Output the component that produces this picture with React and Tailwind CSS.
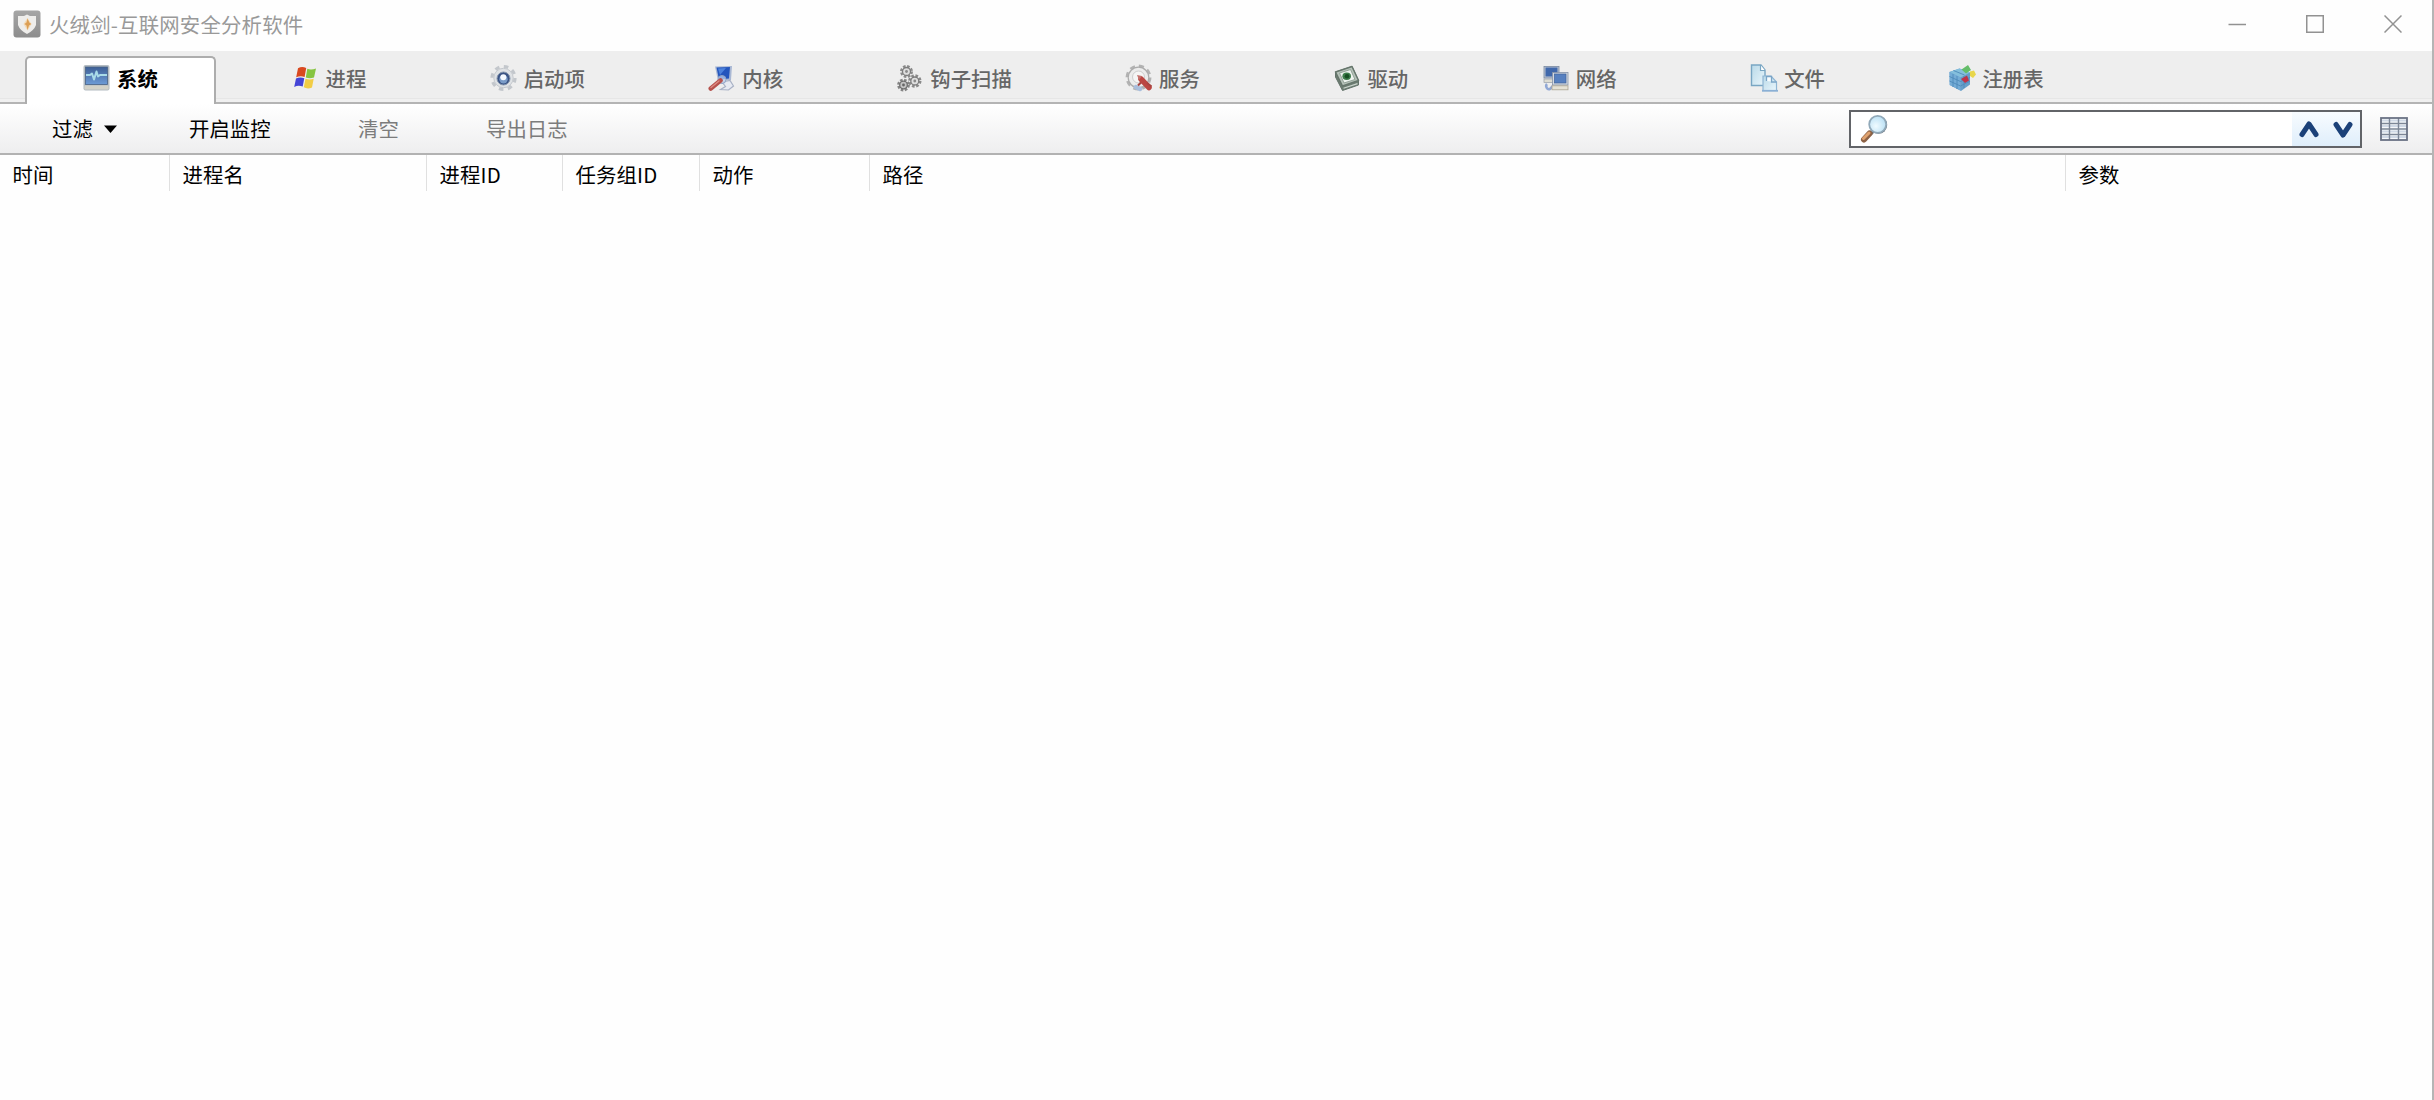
import React from 'react';

const SystemIcon = () => (
    <svg width="28" height="28" viewBox="0 0 28 28">
        <defs>
            <linearGradient id="sysScreen" x1="0" y1="0" x2="0" y2="1">
                <stop offset="0" stopColor="#3d5f96" />
                <stop offset="1" stopColor="#6d9bd6" />
            </linearGradient>
        </defs>
        <rect x="0.5" y="1" width="26" height="25.5" rx="2" fill="#b4bcc2" />
        <rect x="2.5" y="3" width="22" height="17.5" fill="url(#sysScreen)" stroke="#4a6386" strokeWidth="0.8" />
        <rect x="1.5" y="21.5" width="24" height="4" fill="#d3d2c8" />
        <path d="M3 11h4l2-1.500 2 6 2.5-8 1.500 5 2-1.500h7" fill="none" stroke="#a9dbe8" strokeWidth="2" strokeLinejoin="round" />
    </svg>
);

const ProcessIcon = () => (
    <svg width="28" height="28" viewBox="0 0 28 28">
        <path d="M6 4.200Q10 2 14.200 4L12.600 13Q8.500 11.300 4.200 13.300Z" fill="#d9481f" />
        <path d="M15.300 4.800Q19 6.500 24 4.500L22 13.500Q17.600 15 13.800 13.400Z" fill="#86c440" />
        <path d="M4 14.500Q8.200 12.600 12.300 14.300L10.700 22.600Q6.500 20.800 2.200 22.900Z" fill="#4444d6" />
        <path d="M13.500 14.700Q17.300 16.300 21.700 14.800L20 23.500Q15.700 25.500 11.800 23.300Z" fill="#f2cd45" />
    </svg>
);

const StartupIcon = () => (
    <svg width="28" height="28" viewBox="0 0 28 28">
        <circle cx="13.500" cy="14" r="11.500" fill="none" stroke="#c3c7cc" strokeWidth="3.200" strokeDasharray="4.516 4.516" />
        <circle cx="13.500" cy="14" r="9.700" fill="#dfe2e5" stroke="#c4c8cd" />
        <circle cx="13.500" cy="14.500" r="6.500" fill="#3a5384" stroke="#8797ae" />
        <circle cx="13.500" cy="15.200" r="4.200" fill="#7a9bc7" />
        <circle cx="13.300" cy="13.300" r="3" fill="#f4f9ff" />
    </svg>
);

const KernelIcon = () => (
    <svg width="28" height="28" viewBox="0 0 28 28">
        <path d="M7 2.500l17-.5-1 14-13 1z" fill="#a9b8d4" />
        <path d="M8.500 3.500l13.500-.5-1 11.500-10 1z" fill="#2355bd" />
        <path d="M10 4.500l8-.5-6 7z" fill="#4d82dc" />
        <path d="M14 18l8-1.500 3.500 5.500-5 4-8-.5 5-3z" fill="#e7eaf2" stroke="#a8b1c5" strokeWidth="1.200" />
        <circle cx="14" cy="15.500" r="4" fill="#c9d9ef" fillOpacity="0.700" stroke="#8fa3c6" />
        <path d="M2.800 24.500l9.700-8" stroke="#b6524d" strokeWidth="4.600" strokeLinecap="round" />
        <path d="M3 23.500l8-6.500" stroke="#dd8b83" strokeWidth="1.400" strokeLinecap="round" />
    </svg>
);

const HookIcon = () => (
    <svg width="28" height="28" viewBox="0 0 28 28" fill="none">
        <circle cx="10.500" cy="7.500" r="4.900" stroke="#8b8b8b" strokeWidth="3.200" strokeDasharray="2.400 1.450" />
        <circle cx="10.500" cy="7.500" r="4" fill="#dedede" stroke="#7d7d7d" strokeWidth="1.300" />
        <circle cx="18.800" cy="17" r="5" stroke="#8a8a8a" strokeWidth="3.400" strokeDasharray="2.400 1.527" />
        <circle cx="18.800" cy="17" r="4" fill="#dfdfdf" stroke="#7d7d7d" strokeWidth="1.300" />
        <circle cx="7.500" cy="21" r="4.700" stroke="#858585" strokeWidth="3.400" strokeDasharray="2.300 1.391" />
        <circle cx="7.500" cy="21" r="3.800" fill="#c4c4c4" stroke="#707070" strokeWidth="1.300" />
        <circle cx="10.500" cy="7.500" r="1.400" fill="#8a8a8a" />
        <circle cx="18.800" cy="17" r="1.400" fill="#8a8a8a" />
        <circle cx="7.500" cy="21" r="1.400" fill="#666" />
    </svg>
);

const ServiceIcon = () => (
    <svg width="28" height="28" viewBox="0 0 28 28">
        <circle cx="13.500" cy="13.500" r="11.700" fill="none" stroke="#b3b3b3" strokeWidth="2.500" strokeDasharray="5.200 3.990" />
        <circle cx="13.500" cy="13.500" r="10.300" fill="#ececec" stroke="#acacac" strokeWidth="1.200" />
        <circle cx="13.500" cy="13" r="6" fill="#f5f5f5" stroke="#cdcdcd" />
        <path d="M11 23l4 2" stroke="#a9bedc" strokeWidth="4.500" strokeLinecap="round" />
        <path d="M16 15l8 8.500" stroke="#bb4642" strokeWidth="5.500" strokeLinecap="round" />
        <path d="M12 11l5 1-3 4z" fill="#c4716d" />
        <path d="M16 18.500l-3 3M22 19l4.500 3.500" stroke="#a8443f" strokeWidth="2" />
    </svg>
);

const DriverIcon = () => (
    <svg width="28" height="28" viewBox="0 0 28 28" strokeLinejoin="round">
        <path d="M2.500 8L19 2.500 25.500 16.500v4.500L9.500 26.500 2.500 13z" fill="#6d7d72" stroke="#63736a" />
        <path d="M2.500 8L19 2.500 25.500 16.500 9.500 22z" fill="#b7c3ba" stroke="#66766c" strokeWidth="1.500" />
        <path d="M6.500 9L17.500 5.500 22 15.500 11 19z" fill="#edf3ee" stroke="#93a398" strokeWidth="1" />
        <ellipse cx="13.700" cy="12.200" rx="4.300" ry="3.700" fill="#3c7d4a" />
        <circle cx="14" cy="12.200" r="2.300" fill="#164f22" />
        <path d="M10.500 24.300l14-4.700" stroke="#cad4cd" strokeWidth="1.200" />
    </svg>
);

const NetworkIcon = () => (
    <svg width="28" height="28" viewBox="0 0 28 28">
        <rect x="2" y="2.500" width="15" height="11.500" fill="#bac3d0" stroke="#7888a1" strokeWidth="0.800" />
        <rect x="3.500" y="3.500" width="12" height="9" fill="#4068ab" />
        <rect x="2" y="15" width="10" height="3.500" fill="#dddcd2" stroke="#98a0aa" strokeWidth="0.700" />
        <path d="M5 20c-2 2 0 6 3 5l3-3" fill="none" stroke="#91a8d5" strokeWidth="2.500" />
        <rect x="10.500" y="8.500" width="15.500" height="12.500" fill="#d4d9e0" stroke="#8693a8" strokeWidth="0.800" />
        <rect x="12.500" y="10" width="11.500" height="9" fill="#5680c0" stroke="#3f6299" strokeWidth="0.700" />
        <rect x="10" y="21.800" width="16" height="4" fill="#e5e2d5" stroke="#aaa391" strokeWidth="0.800" />
    </svg>
);

const FileIcon = () => (
    <svg width="28" height="28" viewBox="0 0 28 28">
        <defs>
            <linearGradient id="paper" x1="0" y1="0" x2="1" y2="1">
                <stop offset="0" stopColor="#b9d9e8" />
                <stop offset="1" stopColor="#eaf6fc" />
            </linearGradient>
        </defs>
        <path d="M1.500 1h9.500l4 5v15.500h-13.500z" fill="url(#paper)" stroke="#79a6c3" strokeWidth="1.400" />
        <path d="M10.500 1v5.500h4.500" fill="#fff" stroke="#79a6c3" strokeWidth="1.200" />
        <path d="M13 12h8l5.500 6v8.500h-13.500z" fill="url(#paper)" stroke="#8fb5d3" strokeWidth="1.200" />
        <path d="M16.500 17v-4.500h5v5.500h5" fill="#f8fdff" stroke="#7ba5c7" strokeWidth="1.300" />
        <path d="M12 26.800h16" stroke="#8bb0d5" strokeWidth="1.800" />
    </svg>
);

const RegistryIcon = () => (
    <svg width="28" height="28" viewBox="0 0 28 28">
        <path d="M1.500 8l10-3.500 10.500 4v12l-9 6.500-11-6z" fill="#669fca" />
        <path d="M1.500 8l10-3.500 10.500 4-9.500 5z" fill="#84bfdc" />
        <path d="M1.500 8l11 5.500v13L1.500 21z" fill="#74acd6" />
        <path d="M5 10v13M9 12v13M1.500 12.500l11 5 9.500-4M1.500 17l11 5 9.500-5M5.500 6.500l11 4.500M16 12v12" stroke="#4e8aba" strokeWidth="0.900" fill="none" />
        <path d="M13.500 5.500l6.500-4.500 3 5-5 3.500z" fill="#65bd69" />
        <path d="M13 15l6-3.500 2 5-4 2.500z" fill="#be344a" />
        <path d="M22 7.500l4-1 2 4-3 3.500-3-2z" fill="#e8d64a" />
    </svg>
);

const LogoIcon = () => (
    <svg width="28" height="28" viewBox="0 0 28 28">
        <defs>
            <linearGradient id="logoBg" x1="0" y1="0" x2="0" y2="1">
                <stop offset="0" stopColor="#a6a6a6" />
                <stop offset="1" stopColor="#8d8d8d" />
            </linearGradient>
        </defs>
        <rect x="0.500" y="0.500" width="27" height="27" rx="3" fill="url(#logoBg)" />
        <path d="M14 4.500l3 1.500h6v9q-2 5.500-9 9-7-3.500-9-9V6h6z" fill="#eeedeb" />
        <path d="M14.500 8l4 6-4 6.500-4-6.500z" fill="#f3d9b4" />
        <path d="M14.500 8.500l1.800 4 2 1.500-2.300 1.500-1.500 4.500-1-4.500-2-1.500 2-1.500z" fill="#dc9f55" />
    </svg>
);

const SearchIcon = () => (
    <svg width="30" height="30" viewBox="0 0 30 30">
        <defs>
            <radialGradient id="lens" cx="0.400" cy="0.600" r="0.700">
                <stop offset="0" stopColor="#f0fbff" />
                <stop offset="1" stopColor="#b2dcf3" />
            </radialGradient>
        </defs>
        <path d="M14 17l-3 3" stroke="#66717c" strokeWidth="4" />
        <path d="M10.500 19.500L5 25.500" stroke="#8d6245" strokeWidth="6" strokeLinecap="round" />
        <path d="M10 19L4.500 24.500" stroke="#dfa26f" strokeWidth="3" strokeLinecap="round" />
        <circle cx="19.500" cy="11" r="8.700" fill="#68727d" />
        <circle cx="18.700" cy="10.300" r="8.500" fill="url(#lens)" stroke="#91a9b9" strokeWidth="1.800" />
    </svg>
);

const GridIcon = () => (
    <svg width="28" height="24" viewBox="0 0 28 24">
        <rect x="1" y="1" width="26" height="22" fill="#f6f8fb" />
        <path d="M1.500 3.500h25M1.500 9h25M1.500 14.500h25M1.500 20h25" stroke="#d0d9e6" strokeWidth="2" />
        <path d="M1 6.500h26M1 12h26M1 17.500h26M9.500 1v22M18.500 1v22" stroke="#7c8696" strokeWidth="1.400" />
        <rect x="1" y="1" width="26" height="22" fill="none" stroke="#6a7284" strokeWidth="1.800" />
    </svg>
);

const tabs = [
    { label: '系统', icon: SystemIcon },
    { label: '进程', icon: ProcessIcon },
    { label: '启动项', icon: StartupIcon },
    { label: '内核', icon: KernelIcon },
    { label: '钩子扫描', icon: HookIcon },
    { label: '服务', icon: ServiceIcon },
    { label: '驱动', icon: DriverIcon },
    { label: '网络', icon: NetworkIcon },
    { label: '文件', icon: FileIcon },
    { label: '注册表', icon: RegistryIcon }
];

const columns = [
    { label: '时间', width: 'w-[170px]' },
    { label: '进程名', width: 'w-[257px]' },
    { label: '进程ID', width: 'w-[136px]' },
    { label: '任务组ID', width: 'w-[137px]' },
    { label: '动作', width: 'w-[170px]' },
    { label: '路径', width: 'w-[1196px]' }
];

const TitleBar = () => (
    <div className="flex h-[51px] items-center pl-[13px] pr-[30px] pb-[3px]">
        <LogoIcon />
        <h1 className="ml-2 flex-1 tracking-[0.2px] text-[#999]">火绒剑-互联网安全分析软件</h1>
        <div className="flex items-center gap-[60px] text-[#929292]">
            <svg width="18" height="18" viewBox="0 0 18 18" fill="none" stroke="currentColor" strokeWidth="1.500">
                <path d="M0.500 9.500h17.500" />
            </svg>
            <svg width="18" height="18" viewBox="0 0 18 18" fill="none" stroke="currentColor" strokeWidth="1.500">
                <rect x="0.750" y="0.750" width="16.500" height="16.500" />
            </svg>
            <svg width="18" height="18" viewBox="0 0 18 18" fill="none" stroke="currentColor" strokeWidth="1.500">
                <path d="M0.500 0.500l17 17M17.500 0.500l-17 17" />
            </svg>
        </div>
    </div>
);

const TabBar = () => (
    <div className="flex h-[53px] items-end gap-[17.4px] bg-[#eee] pl-[25px] shadow-[inset_0_-2px_0_#b4b4b4,inset_0_-5px_0_#f0f0f0,inset_0_-6px_0_#e6e6e6]">
        {tabs.map(({ label, icon: Icon }, index) => (
            <div
                key={label}
                className={`flex h-12 w-[191px] items-center justify-center gap-[6px] ${index === 0
                        ? 'rounded-t-[5px] border-2 border-b-0 border-[#adadad] bg-white pb-[6px] font-bold text-black'
                        : 'pb-1 font-medium text-[#666]'
                    }`}
            >
                <Icon />
                <span>{label}</span>
            </div>
        ))}
    </div>
);

const Toolbar = () => (
    <div className="flex h-[51px] items-center border-b-2 border-[#b2b2b2] bg-linear-to-b from-white to-[#eeeeef] pl-[52px] pr-6">
        <button className="flex w-[137px] items-center gap-[11px] text-left">
            过滤
            <svg width="13" height="8" viewBox="0 0 13 8">
                <path d="M0 0.500h13L6.500 8z" fill="#000" />
            </svg>
        </button>
        <button className="w-[169px] text-left">开启监控</button>
        <button className="w-[128px] text-left text-[#7c7c7c]">清空</button>
        <button className="text-left text-[#7c7c7c]">导出日志</button>
        <div className="ml-auto flex h-[38px] w-[513px] items-center border-2 border-[#626468] bg-white">
            <span className="ml-2 flex-1"><SearchIcon /></span>
            <div className="flex h-full w-[68px] items-center justify-between bg-linear-to-b from-[#f8fcff] to-[#dfeefb] px-[7px]">
                <svg width="20" height="18" viewBox="0 0 20 18" fill="none" stroke="#1b4179" strokeWidth="5" strokeLinecap="round" strokeLinejoin="round">
                    <path d="M3 14.500L10 4l7 10.500" />
                </svg>
                <svg width="20" height="18" viewBox="0 0 20 18" fill="none" stroke="#1b4179" strokeWidth="5" strokeLinecap="round" strokeLinejoin="round">
                    <path d="M3 4.500L10 15l7-10.500" />
                </svg>
            </div>
        </div>
        <span className="ml-[18px]"><GridIcon /></span>
    </div>
);

const TableHeader = () => (
    <div className="flex h-9 items-center leading-[38px]">
        {columns.map(({ label, width }) => (
            <div key={label} className={`h-full border-r border-[#e0e0e0] pl-[12.5px] tracking-[0.15px] ${width}`}>{label}</div>
        ))}
        <div className="h-full pl-[12.5px]">参数</div>
    </div>
);

const App = () => (
    <div className="flex h-[1100px] w-[2434px] flex-col overflow-hidden border-r-2 border-[#b5b5b5] bg-[#fefefe] font-['Noto_Sans_CJK_SC',sans-serif] text-[20.4px] leading-none text-black">
        <TitleBar />
        <TabBar />
        <Toolbar />
        <TableHeader />
        <main className="flex-1" />
    </div>
);

export default App;
